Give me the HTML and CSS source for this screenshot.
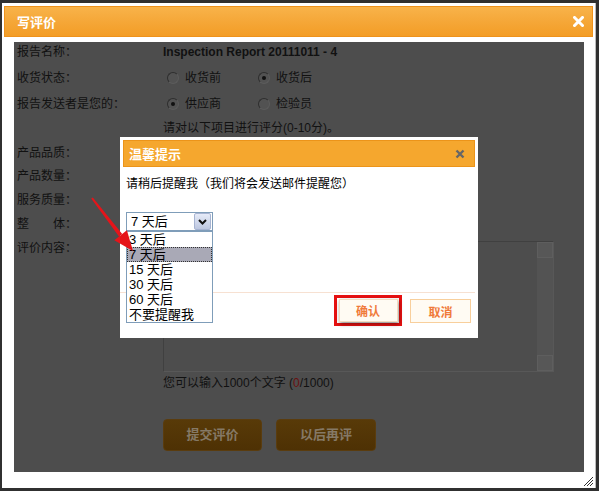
FILE: index.html
```html
<!DOCTYPE html>
<html lang="zh-CN">
<head>
<meta charset="utf-8">
<title>写评价</title>
<link rel="stylesheet" href="styles.css">
</head>
<body>
<div class="frame">
  <div class="titlebar">
    <span class="title">写评价</span>
    <svg class="close-main" width="11" height="11" viewBox="0 0 11 11"><path d="M1.5 1.5 L9.5 9.5 M9.5 1.5 L1.5 9.5" stroke="#fff" stroke-width="3" stroke-linecap="square"/></svg>
  </div>
  <div class="body">
    <div class="form">
      <div class="lbl">报告名称：</div>
      <div class="val strong">Inspection Report 20111011 - 4</div>

      <div class="lbl">收货状态：</div>
      <div class="val">
        <span class="opt"><span class="radio"></span>收货前</span>
        <span class="opt"><span class="radio on"></span>收货后</span>
      </div>

      <div class="lbl">报告发送者是您的：</div>
      <div class="val">
        <span class="opt"><span class="radio on"></span>供应商</span>
        <span class="opt"><span class="radio"></span>检验员</span>
      </div>

      <div class="lbl"></div>
      <div class="val">请对以下项目进行评分(0-10分)。</div>

      <div class="lbl">产品品质：</div>
      <div class="val"></div>
      <div class="lbl">产品数量：</div>
      <div class="val"></div>
      <div class="lbl">服务质量：</div>
      <div class="val"></div>
      <div class="lbl">整　　体：</div>
      <div class="val"></div>

      <div class="lbl top">评价内容：</div>
      <div class="val col">
        <div class="textarea">
          <div class="scroll">
            <span class="sbtn up"></span>
            <span class="sbtn down"></span>
          </div>
        </div>
        <div class="counter">您可以输入1000个文字 (<span class="red">0</span>/1000)</div>
        <div class="actions">
          <span class="bigbtn">提交评价</span>
          <span class="bigbtn">以后再评</span>
        </div>
      </div>
    </div>
  </div>

  <div class="dialog">
    <div class="dtitle">
      <span>温馨提示</span>
      <svg width="10" height="10" viewBox="0 0 10 10"><path d="M1.5 1.5 L8.5 8.5 M8.5 1.5 L1.5 8.5" stroke="#666" stroke-width="2.4"/></svg>
    </div>
    <div class="msg">请稍后提醒我（我们将会发送邮件提醒您）</div>
    <div class="select">
      <span class="seltext">7 天后</span>
      <span class="selbtn"><svg width="9" height="6" viewBox="0 0 9 6"><path d="M1 1 L4.5 4.5 L8 1" fill="none" stroke="#111" stroke-width="2"/></svg></span>
      <ul class="options">
        <li>3 天后</li>
        <li class="hl">7 天后</li>
        <li>15 天后</li>
        <li>30 天后</li>
        <li>60 天后</li>
        <li>不要提醒我</li>
      </ul>
    </div>
    <div class="dfoot">
      <span class="redbox"><span class="dbtn shadow">确认</span></span>
      <span class="dbtn">取消</span>
    </div>
  </div>

  <svg class="arrow" width="50" height="62" viewBox="0 0 50 62">
    <polygon points="4.8,4.4 3.2,5.6 31,43.5 34.2,41.1" fill="#e5141a"/>
    <polygon points="45,58 38.9,37.3 26.3,47.3" fill="#e5141a"/>
  </svg>

  <svg class="grip" width="12" height="12" viewBox="0 0 12 12">
    <path d="M11 2 L2 11 M11 5 L5 11 M11 8 L8 11" stroke="#333" stroke-width="1"/>
  </svg>
</div>
</body>
</html>
```

FILE: styles.css
```css
html, body {
  margin: 0;
  padding: 0;
}
body {
  background: #303030;
  width: 599px;
  height: 491px;
  overflow: hidden;
  font-family: "Liberation Sans", "Noto Sans CJK SC", sans-serif;
  font-size: 12px;
}
.frame {
  position: relative;
  margin: 3px 0 0 2px;
  width: 593px;
  height: 485px;
  background: #fff;
  border-right: 1px solid #bdbdbd;
  overflow: hidden;
}
.titlebar {
  margin: 3px 2px 0 2px;
  height: 29px;
  border: 1px solid #ee921c;
  background: linear-gradient(#f8b34a, #f5a738 50%, #f39d26);
  display: flex;
  align-items: center;
  justify-content: space-between;
  padding: 0 8px 0 12px;
}
.title {
  color: #fff;
  font-weight: bold;
  font-size: 13px;
}
.close-main {
  display: block;
}
.body {
  margin: 5px 0 0 12px;
  width: 570px;
  height: 430px;
  background: #4d4d4d;
  color: #111;
}
.form {
  display: grid;
  grid-template-columns: 146px 1fr;
  grid-template-rows: 26px 26px 24px 25px 23px 24px 24px 24px auto;
  padding-left: 3px;
}
.lbl, .val {
  line-height: 20px;
  height: 20px;
  white-space: nowrap;
}
.lbl.top {
  padding-top: 2px;
  line-height: 16px;
}
.val {
  display: flex;
  align-items: center;
}
.val.col {
  display: block;
  height: auto;
}
.strong {
  font-weight: bold;
  font-size: 12px;
}
.opt {
  display: inline-flex;
  align-items: center;
  width: 91px;
}
.radio {
  width: 10px;
  height: 10px;
  border-radius: 50%;
  border: 1px solid;
  border-color: #2e2e2e #5c5c5c #5c5c5c #2e2e2e;
  background: #525252;
  margin: 0 6px 0 4px;
  position: relative;
}
.radio.on::after {
  content: "";
  position: absolute;
  left: 3px;
  top: 3px;
  width: 4px;
  height: 4px;
  border-radius: 50%;
  background: #111;
}
.textarea {
  margin-top: 3px;
  width: 389px;
  height: 129px;
  border: 1px solid #404040;
  border-right-color: #585858;
  border-bottom-color: #585858;
  display: flex;
  justify-content: flex-end;
}
.scroll {
  width: 16px;
  background: #535353;
  display: flex;
  flex-direction: column;
  justify-content: space-between;
}
.sbtn {
  height: 16px;
  background: #575757;
  border: 1px solid #5e5e5e;
  box-sizing: border-box;
}
.counter {
  line-height: 20px;
  margin-top: 1px;
}
.red {
  color: #6a1010;
}
.actions {
  display: flex;
  gap: 14px;
  margin-top: 26px;
}
.bigbtn {
  width: 97px;
  height: 30px;
  border: 1px solid #5a3c0e;
  border-radius: 4px;
  background: linear-gradient(#583a08, #4e3104);
  color: #857966;
  font-weight: bold;
  font-size: 13px;
  display: flex;
  align-items: center;
  justify-content: center;
}
.actions .bigbtn + .bigbtn {
  width: 98px;
}

/* reminder dialog */
.dialog {
  position: absolute;
  left: 118px;
  top: 134px;
  width: 352px;
  height: 195px;
  padding: 3px;
  background: #fff;
  color: #000;
}
.dtitle {
  height: 25px;
  border: 1px solid #ec9419;
  background: #f5a72e;
  display: flex;
  align-items: center;
  justify-content: space-between;
  padding: 0 9px 0 5px;
  color: #fff;
  font-weight: bold;
  font-size: 13px;
}
.dtitle svg {
  display: block;
}
.msg {
  margin: 9px 0 0 3px;
  line-height: 16px;
}
.select {
  position: relative;
  margin: 20px 0 0 3px;
  width: 85px;
  height: 17px;
  border: 1px solid #7f9db9;
  display: flex;
  align-items: center;
  justify-content: space-between;
  font-size: 13px;
}
.seltext {
  padding-left: 4px;
  line-height: 17px;
}
.selbtn {
  width: 15px;
  height: 15px;
  margin-right: 1px;
  border: 1px solid #a7b4d2;
  border-radius: 2px;
  background: linear-gradient(#e6ebf8, #bdc7e0);
  display: flex;
  align-items: center;
  justify-content: center;
}
.selbtn svg {
  display: block;
}
.options {
  position: absolute;
  left: -1px;
  top: 18px;
  width: 85px;
  margin: 0;
  padding: 0;
  list-style: none;
  background: #fff;
  border: 1px solid #7f9db9;
  z-index: 2;
}
.options li {
  height: 15px;
  line-height: 15px;
  padding-left: 2px;
  font-size: 13px;
  box-sizing: border-box;
}
.options li.hl {
  background: #a9a9b6;
  outline: 1px dotted #333;
  outline-offset: -1px;
}
.dfoot {
  margin-top: 61px;
  border-top: 1px solid #f7e1d2;
  margin-left: -3px;
  padding: 2px 4px 0 0;
  display: flex;
  justify-content: flex-end;
  align-items: flex-start;
  gap: 8px;
}
.redbox {
  width: 62px;
  height: 25px;
  border: 3px solid #e61010;
  display: flex;
  align-items: center;
  justify-content: center;
}
.dbtn {
  width: 59px;
  height: 22px;
  margin-top: 4px;
  border: 1px solid #f8cf9c;
  background: #fffbf3;
  color: #f07a3a;
  font-weight: bold;
  font-size: 12px;
  display: flex;
  align-items: center;
  justify-content: center;
}
.redbox .dbtn {
  margin-top: 0;
  width: 57px;
  height: 21px;
  border-color: #f3dcc0;
}
.dbtn.shadow {
  box-shadow: 1px 2px 4px rgba(0, 0, 0, 0.45);
}
.arrow {
  position: absolute;
  left: 86px;
  top: 190px;
  z-index: 3;
}
.grip {
  position: absolute;
  right: 1px;
  bottom: 1px;
}
```
